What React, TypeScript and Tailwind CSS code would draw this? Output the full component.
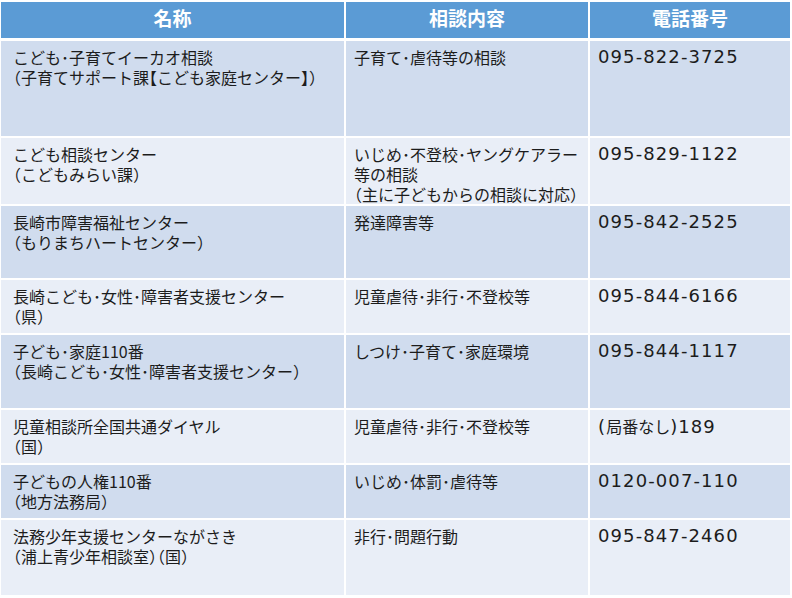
import React from "react";

type Row = {
  name: string[];
  content: string[];
  tel: React.ReactNode;
  h: string;
};

const rows: Row[] = [
  {
    name: ["こども･子育てイーカオ相談", "（子育てサポート課【こども家庭センター】）"],
    content: ["子育て･虐待等の相談"],
    tel: "095-822-3725",
    h: "h-[95px]",
  },
  {
    name: ["こども相談センター", "（こどもみらい課）"],
    content: ["いじめ･不登校･ヤングケアラー", "等の相談", "（主に子どもからの相談に対応）"],
    tel: "095-829-1122",
    h: "h-[66px]",
  },
  {
    name: ["長崎市障害福祉センター", "（もりまちハートセンター）"],
    content: ["発達障害等"],
    tel: "095-842-2525",
    h: "h-[72px]",
  },
  {
    name: ["長崎こども･女性･障害者支援センター", "（県）"],
    content: ["児童虐待･非行･不登校等"],
    tel: "095-844-6166",
    h: "h-[53px]",
  },
  {
    name: ["子ども･家庭110番", "（長崎こども･女性･障害者支援センター）"],
    content: ["しつけ･子育て･家庭環境"],
    tel: "095-844-1117",
    h: "h-[73px]",
  },
  {
    name: ["児童相談所全国共通ダイヤル", "（国）"],
    content: ["児童虐待･非行･不登校等"],
    tel: (
      <>
        (<span className="text-[16px] tracking-normal [font-family:'Noto_Sans_CJK_JP',sans-serif]">局番なし</span>)189
      </>
    ),
    h: "h-[53px]",
  },
  {
    name: ["子どもの人権110番", "（地方法務局）"],
    content: ["いじめ･体罰･虐待等"],
    tel: "0120-007-110",
    h: "h-[53px]",
  },
  {
    name: ["法務少年支援センターながさき", "（浦上青少年相談室）（国）"],
    content: ["非行･問題行動"],
    tel: "095-847-2460",
    h: "h-[75px]",
  },
];

const cols = "grid grid-cols-[343px_242px_200px] gap-x-[2px]";

export default function App() {
  return (
    <div className="w-[792px] h-[598px] bg-white pt-[2px] pl-[1px] overflow-hidden text-[#1c1c1c] [font-family:'Noto_Sans_CJK_JP','Noto_Sans',sans-serif]">
      {/* header */}
      <div className={`${cols} h-[36px] text-white font-bold text-[19px] leading-none`}>
        <div className="bg-[#5b9bd5] flex justify-center pt-[6px]">名称</div>
        <div className="bg-[#5b9bd5] flex justify-center pt-[6px]">相談内容</div>
        <div className="bg-[#5b9bd5] flex justify-center pt-[6px]">電話番号</div>
      </div>

      {/* body */}
      <div className={`${cols} gap-y-[2px] mt-[3px] text-[16px] leading-[20px] [font-feature-settings:'halt']`}>
        {rows.map((r, i) => {
          const bg = i % 2 === 0 ? "bg-[#d0dcee]" : "bg-[#e9eef7]";
          return (
            <React.Fragment key={i}>
              <div className={`${bg} ${r.h} pl-[12px] pt-[6px] whitespace-nowrap`}>
                {r.name.map((l, j) => (
                  <div key={j}>{l}</div>
                ))}
              </div>
              <div className={`${bg} ${r.h} pl-[8px] pt-[6px] whitespace-nowrap`}>
                {r.content.map((l, j) => (
                  <div key={j}>{l}</div>
                ))}
              </div>
              <div
                className={`${bg} ${r.h} pl-[8px] pt-[5px] whitespace-nowrap text-[18px] leading-[22px] tracking-[1.1px] [font-family:'DejaVu_Sans','Noto_Sans_CJK_JP',sans-serif]`}
              >
                {r.tel}
              </div>
            </React.Fragment>
          );
        })}
      </div>
    </div>
  );
}
